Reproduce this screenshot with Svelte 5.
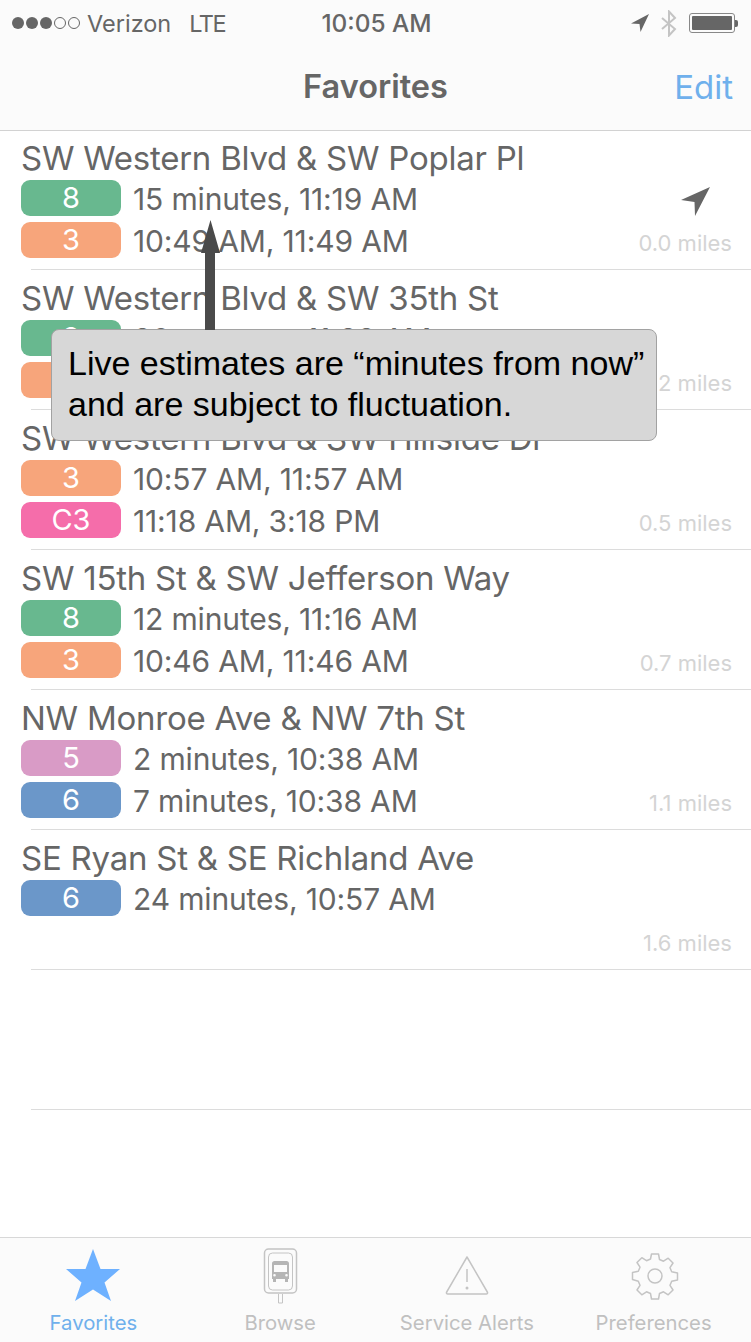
<script>
	const stops = [
		{
			name: "SW Western Blvd & SW Poplar Pl",
			miles: "0.0 miles",
			nearest: true,
			routes: [
				{ label: "8", color: "#68b88f", times: "15 minutes, 11:19 AM" },
				{ label: "3", color: "#f7a57b", times: "10:49 AM, 11:49 AM" }
			]
		},
		{
			name: "SW Western Blvd & SW 35th St",
			miles: "0.2 miles",
			routes: [
				{ label: "8", color: "#68b88f", times: "30 minutes, 11:33 AM" },
				{ label: "3", color: "#f7a57b", times: "10:52 AM, 11:52 AM" }
			]
		},
		{
			name: "SW Western Blvd & SW Hillside Dr",
			miles: "0.5 miles",
			routes: [
				{ label: "3", color: "#f7a57b", times: "10:57 AM, 11:57 AM" },
				{ label: "C3", color: "#f56daa", times: "11:18 AM, 3:18 PM" }
			]
		},
		{
			name: "SW 15th St & SW Jefferson Way",
			miles: "0.7 miles",
			routes: [
				{ label: "8", color: "#68b88f", times: "12 minutes, 11:16 AM" },
				{ label: "3", color: "#f7a57b", times: "10:46 AM, 11:46 AM" }
			]
		},
		{
			name: "NW Monroe Ave & NW 7th St",
			miles: "1.1 miles",
			routes: [
				{ label: "5", color: "#d99bc6", times: "2 minutes, 10:38 AM" },
				{ label: "6", color: "#6b97c9", times: "7 minutes, 10:38 AM" }
			]
		},
		{
			name: "SE Ryan St & SE Richland Ave",
			miles: "1.6 miles",
			routes: [{ label: "6", color: "#6b97c9", times: "24 minutes, 10:57 AM" }]
		}
	]
</script>

<div class="screen">
	<header class="header">
		<div class="status">
			<div class="carrier">
				<span class="signal">
					<i class="dot"></i><i class="dot"></i><i class="dot"></i><i class="dot dot--off"></i><i class="dot dot--off"></i>
				</span>
				<span>Verizon</span>
				<span class="lte">LTE</span>
			</div>
			<div class="clock">10:05 AM</div>
			<div class="indicators">
				<svg width="18" height="18" viewBox="0 0 18 18"><path fill="#666" d="M18 0 0 9.500l8.500.5 1 8z" /></svg>
				<svg width="16" height="27" viewBox="0 0 16 27"><path fill="none" stroke="#c4c4c4" stroke-width="2" d="M1 8 14 19 8 25.500V1.500L14 8 1 19" /></svg>
				<div class="battery"><div class="battery__fill"></div></div>
				<div class="battery__tip"></div>
			</div>
		</div>
		<div class="nav">
			<h1>Favorites</h1>
			<span class="edit">Edit</span>
		</div>
	</header>

	<ul class="list">
		{#each stops as stop}
			<li class="stop">
				<div class="stop__inner">
					<div class="stop__main">
						<div class="stop__name">{stop.name}</div>
						{#each stop.routes as route}
							<div class="route">
								<span class="badge" style="background-color: {route.color}">{route.label}</span>
								<span class="times">{route.times}</span>
							</div>
						{/each}
					</div>
					<div class="stop__side">
						{#if stop.nearest}
							<svg class="near" width="30" height="30" viewBox="0 0 30 30"><path fill="#666" d="M29 1 0 14l13.500 2L14 30z" /></svg>
						{/if}
						<span class="miles">{stop.miles}</span>
					</div>
				</div>
			</li>
		{/each}
		<li class="stop"><div class="stop__inner"></div></li>
	</ul>

	<nav class="tabs">
		<div class="tab tab--active">
			<svg width="56" height="56" viewBox="0 0 56 56"><path fill="#6eb1ff" d="M28 1l7.500 20H55L39.500 34.500 46 53 28 41.500 10 53l6.500-18.500L1 21h19.500z" /></svg>
			<span>Favorites</span>
		</div>
		<div class="tab">
			<svg width="56" height="56" viewBox="0 0 56 56" fill="none" stroke="#c4c4c4" stroke-width="1.500">
				<rect x="12.500" y="1" width="32" height="44" rx="4" />
				<rect x="16.500" y="5" width="24" height="37" rx="4" stroke-width="1" />
				<path fill="#b5b5b5" stroke="none" d="M20 15.500c0-1.500 1-2.500 2.500-2.500h12c1.500 0 2.500 1 2.500 2.500V31h-1v3h-3v-3h-9v3h-3v-3h-1zm2 1.500v7h13v-7zm.5 9a1.300 1.300 0 1 0 0 2.600 1.300 1.300 0 0 0 0-2.600zm12 0a1.300 1.300 0 1 0 0 2.600 1.300 1.300 0 0 0 0-2.600z" fill-rule="evenodd" />
				<path stroke-width="1" d="M26.500 46v9h4v-9" />
			</svg>
			<span>Browse</span>
		</div>
		<div class="tab">
			<svg width="56" height="56" viewBox="0 0 56 56" fill="none" stroke="#c4c4c4" stroke-width="1.500">
				<path stroke-linejoin="round" d="M28 9 7.700 44c-.6 1 0 2 1 2h38.600c1 0 1.600-1 1-2z" />
				<path d="M28 21v13" />
				<circle cx="28" cy="40" r="1.500" fill="#c4c4c4" stroke="none" />
			</svg>
			<span>Service Alerts</span>
		</div>
		<div class="tab">
			<svg width="56" height="56" viewBox="-1 0 56 56" fill="none" stroke="#c4c4c4" stroke-width="1.500">
				<path stroke-linejoin="round" d="M24.500 6h7l1 5.500 4 1.700 4.700-3 4.800 4.800-3 4.700 1.700 4 5.800 1.300v7l-5.800 1.300-1.700 4 3 4.700-4.800 4.800-4.700-3-4 1.700-1 5.500h-7l-1-5.500-4-1.700-4.700 3-4.800-4.800 3-4.700-1.700-4L5.500 31.500v-7l5.800-1.300 1.700-4-3-4.700 4.800-4.800 4.700 3 4-1.700z" />
				<circle cx="28" cy="28" r="7" />
			</svg>
			<span>Preferences</span>
		</div>
	</nav>

	<div class="callout">
		Live estimates are “minutes from now”<br />and are subject to fluctuation.
	</div>
	<svg class="pointer" width="21" height="110" viewBox="0 0 21 110"><path fill="#4a4a4a" d="M10.500 0 20 33h-5v77H5V33H1z" /></svg>
</div>

<style>
	:global(body) {
		background: #fff;
	}

	.screen {
		position: relative;
		display: flex;
		flex-direction: column;
		width: 751px;
		height: 1342px;
		overflow: hidden;
		background: #fff;
		color: #666;
		font-family: Inter, "Liberation Sans", sans-serif;
	}

	.header {
		flex: none;
		height: 130px;
		background: #fbfbfb;
		border-bottom: 1px solid #d2d2d2;
	}

	.status {
		display: grid;
		grid-template-columns: 1fr auto 1fr;
		align-items: center;
		height: 46px;
		padding: 0 13px 0 12px;
		font-size: 23.500px;
	}

	.carrier {
		display: flex;
		align-items: center;
	}

	.signal {
		display: flex;
		gap: 2px;
		margin-right: 7px;
	}

	.dot {
		width: 12px;
		height: 12px;
		border-radius: 50%;
		background: #666;
	}

	.dot--off {
		background: none;
		border: 1px solid #666;
		box-sizing: border-box;
	}

	.lte {
		margin-left: 18px;
		letter-spacing: -1.500px;
	}

	.clock {
		margin-left: 3px;
		font-size: 24.400px;
		font-weight: 500;
		text-align: center;
	}

	.indicators {
		display: flex;
		align-items: center;
		justify-content: flex-end;
	}

	.indicators svg:nth-child(2) {
		margin: 0 12px;
	}

	.battery {
		box-sizing: border-box;
		width: 46px;
		height: 20px;
		padding: 2px;
		border: 1px solid #888;
		border-radius: 3px;
	}

	.battery__fill {
		height: 100%;
		background: #666;
		border-radius: 1px;
	}

	.battery__tip {
		width: 3px;
		height: 7px;
		background: #666;
		border-radius: 0 2px 2px 0;
	}

	.nav {
		position: relative;
		display: flex;
		align-items: center;
		justify-content: center;
		height: 84px;
		padding-bottom: 3px;
		box-sizing: border-box;
	}

	h1 {
		margin: 0;
		font-size: 32.500px;
		font-weight: 600;
	}

	.edit {
		position: absolute;
		right: 18px;
		font-size: 33px;
		color: #6fb0ec;
	}

	.list {
		flex: 1;
		margin: -1px 0 0;
		padding: 0;
		list-style: none;
	}

	.stop {
		padding-left: 31px;
	}

	.stop__inner {
		display: flex;
		justify-content: space-between;
		box-sizing: border-box;
		height: 140px;
		padding-right: 19px;
		border-bottom: 1px solid #dcdcdc;
	}

	.stop__main {
		margin-left: -10px;
		padding-top: 8px;
	}

	.stop__name {
		height: 42px;
		font-size: 33px;
		line-height: 40px;
		letter-spacing: -0.250px;
		white-space: nowrap;
	}

	.route {
		display: flex;
		align-items: center;
		gap: 12px;
		height: 36px;
		margin-bottom: 6px;
	}

	.badge {
		width: 100px;
		height: 36px;
		border-radius: 9px;
		color: #fff;
		font-size: 29px;
		line-height: 36px;
		text-align: center;
	}

	.times {
		padding-top: 2px;
		font-size: 30px;
		letter-spacing: -0.150px;
		white-space: nowrap;
	}

	.stop__side {
		display: flex;
		flex-direction: column;
		align-items: flex-end;
		justify-content: flex-end;
		padding-bottom: 13px;
	}

	.near {
		margin: 0 21px 14px 0;
	}

	.miles {
		font-size: 22px;
		color: #d4d4d4;
		white-space: nowrap;
	}

	.tabs {
		flex: none;
		display: grid;
		grid-template-columns: repeat(4, 1fr);
		height: 104px;
		padding-right: 4px;
		background: #fbfbfb;
		border-top: 1px solid #d8d8d8;
	}

	.tab {
		display: flex;
		flex-direction: column;
		align-items: center;
		padding-top: 10px;
		font-size: 20.300px;
		color: #c0c0c0;
	}

	.tab span {
		margin-top: 6px;
		white-space: nowrap;
	}

	.tab--active {
		color: #6fb0ec;
	}

	.callout {
		position: absolute;
		left: 51px;
		top: 329px;
		box-sizing: border-box;
		width: 606px;
		height: 112px;
		padding: 13px 0 0 16px;
		background: #d7d7d7;
		border: 1px solid #a2a2a2;
		border-radius: 8px;
		color: #000;
		font-family: "Liberation Sans", Arial, sans-serif;
		font-size: 34px;
		line-height: 41px;
		white-space: nowrap;
	}

	.pointer {
		position: absolute;
		left: 200px;
		top: 220px;
	}
</style>
